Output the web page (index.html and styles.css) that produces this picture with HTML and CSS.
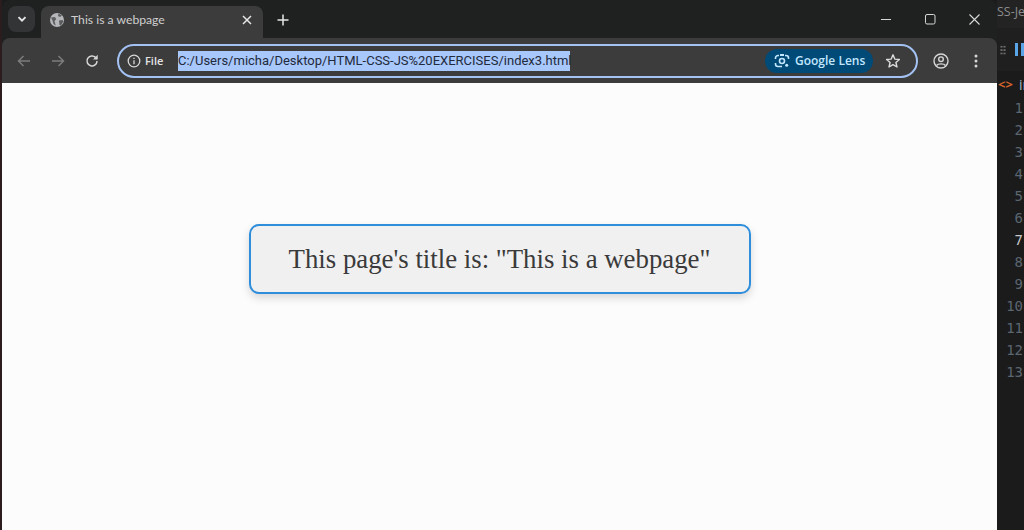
FILE: index.html
```html
<!DOCTYPE html>
<html lang="en">
<head>
<meta charset="utf-8">
<title>This is a webpage</title>
<link rel="stylesheet" href="styles.css">
</head>
<body>
<div class="desk-edge"></div>
<main class="browser">
  <header class="titlebar">
    <button class="tab-search" aria-label="Search tabs">
      <svg width="12" height="12" viewBox="0 0 12 12"><path d="M2.500 4.200 6 7.700l3.500-3.500" fill="none" stroke="#e6e6e6" stroke-width="1.900"/></svg>
    </button>
    <div class="tab">
      <svg class="globe" width="16" height="16" viewBox="0 0 16 16"><circle cx="8" cy="8" r="7" fill="#b4b6b9"/><path d="M2 5.500 6 5l1.200 2.200L5.500 9l1.200 4.500L4.500 12 3.500 8.500zM9.500 1.500l3.500 2-2 1.500-2-1zM10 8.500l3.500-.5.8 1.500-2.300 4-1.500-.5z" fill="#5c5d5f"/></svg>
      <span class="tab-title">This is a webpage</span>
      <svg class="tab-close" width="10" height="10" viewBox="0 0 10 10"><path d="M1 1l8 8M9 1 1 9" stroke="#e6e6e6" stroke-width="1.500"/></svg>
    </div>
    <svg class="new-tab" width="12" height="12" viewBox="0 0 12 12"><path d="M6 .5v11M.5 6h11" stroke="#e6e6e6" stroke-width="1.500"/></svg>
    <div class="win-controls">
      <svg width="11" height="11" viewBox="0 0 11 11"><path d="M0 5.500h10" stroke="#d8d8d8" stroke-width="1"/></svg>
      <svg width="11" height="11" viewBox="0 0 11 11"><rect x=".5" y=".5" width="9.500" height="9.500" rx="1.500" fill="none" stroke="#d8d8d8"/></svg>
      <svg width="11" height="11" viewBox="0 0 11 11"><path d="M.5.5l10 10M10.500.5l-10 10" stroke="#d8d8d8" stroke-width="1.100"/></svg>
    </div>
  </header>
  <nav class="toolbar">
    <svg class="nav-icon" width="16" height="16" viewBox="0 0 16 16"><path d="M14 8H2.500M7.500 3 2.500 8l5 5" fill="none" stroke="#7c7c7c" stroke-width="1.500"/></svg>
    <svg class="nav-icon" width="16" height="16" viewBox="0 0 16 16"><path d="M2 8h11.500M8.500 3l5 5-5 5" fill="none" stroke="#7c7c7c" stroke-width="1.500"/></svg>
    <svg class="nav-icon" width="16" height="16" viewBox="0 0 16 16"><path d="M13 8a5 5 0 1 1-1.500-3.600L13 5.800" fill="none" stroke="#d6d6d6" stroke-width="1.500"/><path d="M13.700 1.800v4.700H9z" fill="#d6d6d6"/></svg>
    <div class="omnibox">
      <svg width="14" height="14" viewBox="0 0 14 14"><circle cx="7" cy="7" r="5.800" fill="none" stroke="#d8d8d8" stroke-width="1.300"/><path d="M7 6.200v4M7 3.800v1.300" stroke="#d8d8d8" stroke-width="1.300"/></svg>
      <span class="chip">File</span>
      <span class="url">C:/Users/micha/Desktop/HTML-CSS-JS%20EXERCISES/index3.html</span>
      <span class="lens">
        <svg width="16" height="16" viewBox="0 0 16 16"><path d="M5 2.500H4A2.500 2.500 0 0 0 1.500 5v1M11 2.500h1A2.500 2.500 0 0 1 14.500 5v1M1.500 10v1A2.500 2.500 0 0 0 4 13.500h4" fill="none" stroke="#c2e7ff" stroke-width="1.600"/><circle cx="8" cy="8" r="2.500" fill="none" stroke="#c2e7ff" stroke-width="1.600"/><circle cx="12.700" cy="12.300" r="1.500" fill="#c2e7ff"/><path d="M6 2h4" stroke="#c2e7ff" stroke-width="2"/></svg>
        Google Lens
      </span>
      <svg class="star" width="16" height="16" viewBox="0 0 16 16"><path d="M8 1.800l1.800 4.300 4.600.4-3.500 3 1.100 4.500L8 11.600 4 14l1.100-4.500-3.500-3 4.600-.4z" fill="none" stroke="#dcdcdc" stroke-width="1.400" stroke-linejoin="round"/></svg>
    </div>
    <svg class="account" width="16" height="16" viewBox="0 0 16 16"><circle cx="8" cy="8" r="7" fill="none" stroke="#d6d6d6" stroke-width="1.400"/><circle cx="8" cy="6.200" r="2.300" fill="none" stroke="#d6d6d6" stroke-width="1.400"/><path d="M3.500 12.500C5 10.300 11 10.300 12.500 12.500" fill="none" stroke="#d6d6d6" stroke-width="1.400"/></svg>
    <svg class="menu" width="4" height="14" viewBox="0 0 4 14"><circle cx="2" cy="2" r="1.500" fill="#d6d6d6"/><circle cx="2" cy="7" r="1.500" fill="#d6d6d6"/><circle cx="2" cy="12" r="1.500" fill="#d6d6d6"/></svg>
  </nav>
  <section class="page">
    <div class="card">This page's title is: "This is a webpage"</div>
  </section>
</main>
<aside class="editor">
  <div class="ed-tabs">SS-Je</div>
  <div class="ed-bar"><span class="grip"></span><span class="blue-mark"></span></div>
  <div class="ed-file"><span class="ed-tag">&lt;&gt;</span><span class="ed-name">in</span></div>
  <ol class="lines">
    <li>1</li><li>2</li><li>3</li><li>4</li><li>5</li><li>6</li><li class="current">7</li><li>8</li><li>9</li><li>10</li><li>11</li><li>12</li><li>13</li>
  </ol>
</aside>
</body>
</html>
```
FILE: styles.css
```css
* { box-sizing: border-box; }
html, body { margin: 0; height: 100%; }
body {
  width: 1024px;
  height: 530px;
  display: flex;
  overflow: hidden;
  background: #1b1b1c;
  font-family: "Open Sans", "Noto Sans", sans-serif;
}
.desk-edge { width: 2px; flex: none; background: #2b1c1e; }
.browser { width: 995px; flex: none; display: flex; flex-direction: column; background: #1f2020; border-radius: 8px 8px 0 0; overflow: hidden; }

.titlebar { height: 38px; flex: none; display: flex; align-items: flex-start; padding: 6px 0 0 6px; }
.tab-search {
  width: 27px; height: 26px; padding: 0; border: 0; border-radius: 8px;
  background: #333435; display: flex; align-items: center; justify-content: center;
}
.tab {
  width: 222px; height: 32px; margin-left: 6px; padding: 0 11px 5px 8px;
  background: #3c3c3c; border-radius: 8px 8px 0 0;
  display: flex; align-items: center;
}
.globe { flex: none; }
.tab-title { margin-left: 6px; flex: 1; font-family: Lato, sans-serif; font-size: 12.200px; color: #cfcfcf; white-space: nowrap; }
.new-tab { margin: 8px 0 0 14px; }
.win-controls { margin-left: auto; margin-top: 8px; margin-right: 17px; display: flex; gap: 33px; }

.toolbar {
  height: 45px; flex: none; background: #3c3c3c; border-radius: 8px 8px 0 0;
  display: flex; align-items: center; padding: 0 13px 0 14px;
}
.nav-icon { margin-right: 18px; flex: none; }
.nav-icon:nth-of-type(3) { margin-right: 17px; }
.omnibox {
  width: 801px; height: 34px; flex: none; border: 2px solid #a3c2f3; border-radius: 17px;
  display: flex; align-items: center; padding: 0 15px 0 8px;
}
.chip { margin-left: 4px; width: 33px; flex: none; font-size: 11px; font-weight: 600; color: #e4e4e4; }
.url {
  font-size: 13px; line-height: 20px; height: 20px; width: 392px; flex: none;
  background: #a8c7fa; color: #1f2a3a; white-space: nowrap;
  font-family: Roboto, sans-serif;
}
.lens {
  margin-left: auto; width: 108px; height: 24px; border-radius: 12px; background: #004a77;
  color: #c2e7ff; font-size: 12px; font-weight: 600; white-space: nowrap;
  display: flex; align-items: center; gap: 5px; padding-left: 9px;
}
.star { margin-left: 12px; flex: none; }
.account { margin-left: 15px; flex: none; }
.menu { margin-left: 25px; flex: none; }

.page { flex: 1; background: #fcfcfc; display: flex; justify-content: center; align-items: flex-start; padding-top: 141px; }
.card {
  width: 502px; height: 70px; border: 2px solid #2f8edb; border-radius: 10px;
  background: #f0f0f0; box-shadow: 0 4px 8px rgba(0, 0, 0, .15);
  display: flex; align-items: center; justify-content: center;
  font-family: "Liberation Serif", serif; font-size: 26.800px; color: #3a3a3a; white-space: nowrap;
}

.editor { flex: 1; min-width: 0; overflow: hidden; background: #1b1b1c; display: flex; flex-direction: column; }
.ed-tabs { height: 28px; flex: none; font-size: 12.500px; line-height: 24px; color: #8c8c8c; white-space: nowrap; background: #232324; overflow: hidden; }
.ed-bar { height: 43px; flex: none; display: flex; align-items: center; gap: 9px; padding-left: 3px; background: #1f1f20; }
.grip {
  width: 6px; height: 10px; flex: none;
  background-image: radial-gradient(circle, #6b6b6b 1px, transparent 1.200px);
  background-size: 3px 3.400px;
}
.blue-mark { width: 9px; height: 13px; flex: none; border-left: 3px solid #5aa5e8; border-right: 3px solid #5aa5e8; }
.ed-file { height: 26px; flex: none; display: flex; align-items: center; gap: 6px; white-space: nowrap; font-size: 14px; color: #a8b8c8; padding-left: 1px; }
.ed-tag { color: #d9642b; font-weight: 700; font-size: 13px; }
.lines {
  list-style: none; margin: 0; padding: 0 1px 0 0; text-align: right;
  font-family: "DejaVu Sans Mono", "Liberation Mono", monospace; font-size: 14px; line-height: 22px; color: #5c6670;
}
.lines .current { color: #c8c8c8; }
```
